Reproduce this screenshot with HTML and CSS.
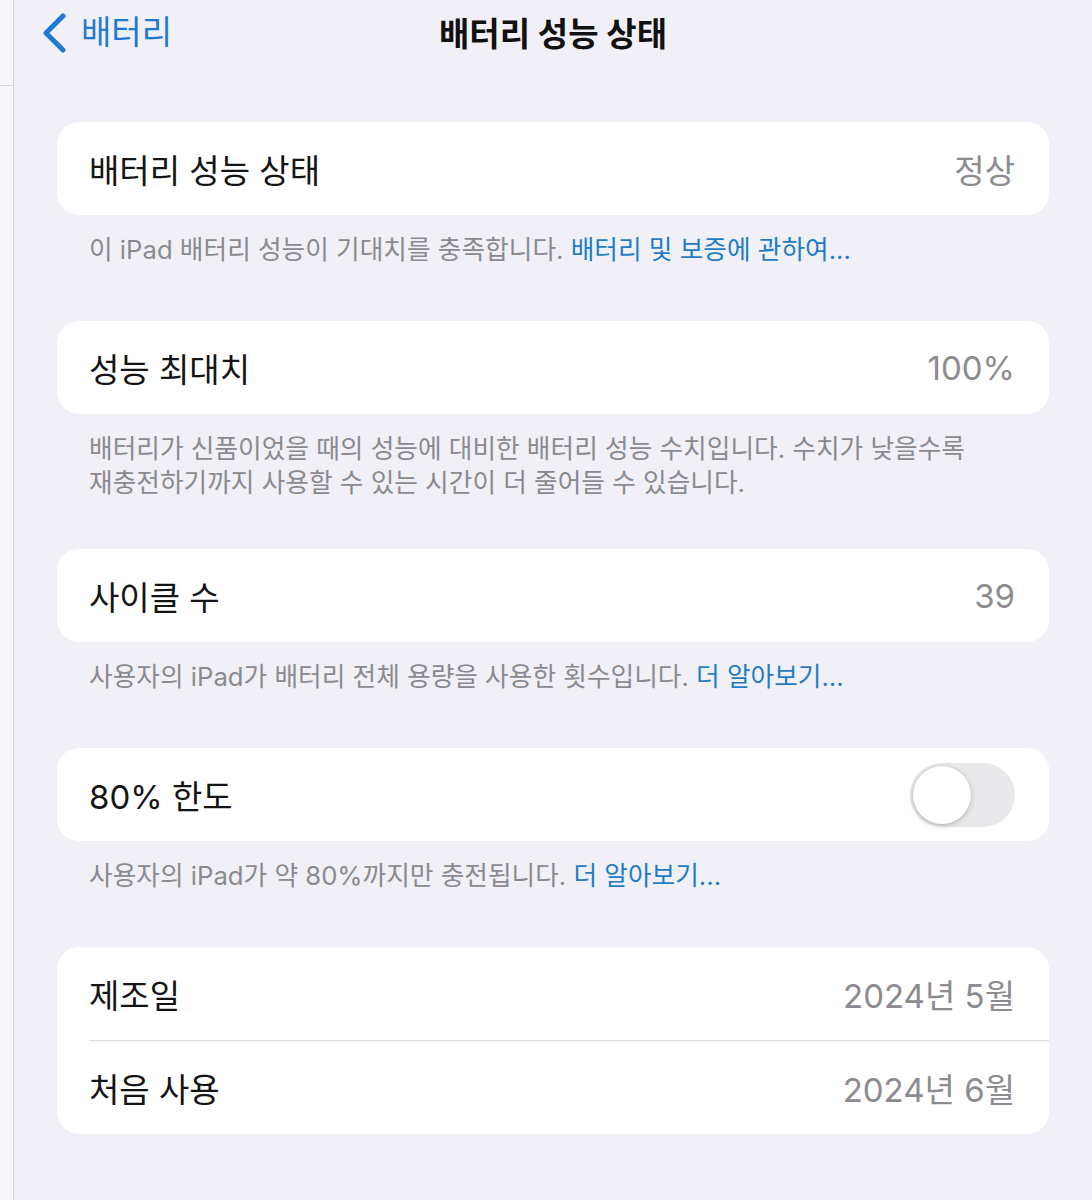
FILE: index.html
```html
<!DOCTYPE html>
<html lang="ko">
<head>
    <meta charset="UTF-8">
    <meta name="viewport" content="width=device-width, initial-scale=1.0">
    <title>배터리 성능 상태</title>
    <link rel="stylesheet" href="styles.css">
</head>
<body>
    <div class="page">
        <div class="sidebar-edge">
            <div class="sidebar-line"></div>
        </div>
        <div class="main">
            <header class="nav-bar">
                <a class="back" href="#">
                    <svg width="26" height="40" viewBox="0 0 26 40"><path d="M22 3 L5 20 L22 37" fill="none" stroke="#1f7ad6" stroke-width="5" stroke-linecap="round" stroke-linejoin="round"/></svg>
                    <span>배터리</span>
                </a>
                <h1 class="nav-title">배터리 성능 상태</h1>
            </header>

            <div class="group">
                <div class="card">
                    <div class="row">
                        <span class="label">배터리 성능 상태</span>
                        <span class="value">정상</span>
                    </div>
                </div>
                <p class="footnote">이 iPad 배터리 성능이 기대치를 충족합니다. <a href="#">배터리 및 보증에 관하여...</a></p>
            </div>

            <div class="group group-tight">
                <div class="card">
                    <div class="row">
                        <span class="label">성능 최대치</span>
                        <span class="value">100%</span>
                    </div>
                </div>
                <p class="footnote">배터리가 신품이었을 때의 성능에 대비한 배터리 성능 수치입니다. 수치가 낮을수록<br>재충전하기까지 사용할 수 있는 시간이 더 줄어들 수 있습니다.</p>
            </div>

            <div class="group">
                <div class="card">
                    <div class="row">
                        <span class="label">사이클 수</span>
                        <span class="value">39</span>
                    </div>
                </div>
                <p class="footnote">사용자의 iPad가 배터리 전체 용량을 사용한 횟수입니다. <a href="#">더 알아보기...</a></p>
            </div>

            <div class="group">
                <div class="card">
                    <div class="row">
                        <span class="label">80% 한도</span>
                        <span class="switch"><span class="knob"></span></span>
                    </div>
                </div>
                <p class="footnote">사용자의 iPad가 약 80%까지만 충전됩니다. <a href="#">더 알아보기...</a></p>
            </div>

            <div class="group">
                <div class="card">
                    <div class="row">
                        <span class="label">제조일</span>
                        <span class="value">2024년 5월</span>
                    </div>
                    <div class="divider"></div>
                    <div class="row">
                        <span class="label">처음 사용</span>
                        <span class="value">2024년 6월</span>
                    </div>
                </div>
            </div>
        </div>
    </div>
</body>
</html>
```

FILE: styles.css
```css
body {
    margin: 0;
    padding: 0;
    background-color: #f1f0f6;
    font-family: Inter, "Noto Sans CJK KR", "Noto Sans", sans-serif;
    color: #111;
}
.page {
    display: flex;
    min-height: 1200px;
}
.sidebar-edge {
    width: 13px;
    flex-shrink: 0;
    background-color: #f7f7f9;
    border-right: 1px solid #d6d6da;
}
.sidebar-line {
    margin-top: 85px;
    border-top: 1px solid #d6d6da;
}
.main {
    flex: 1;
    padding: 0 43px 0 43px;
}
.nav-bar {
    position: relative;
    height: 64px;
    display: flex;
    align-items: center;
    justify-content: center;
    margin-bottom: 58px;
}
.back {
    position: absolute;
    left: -16px;
    top: 12px;
    display: flex;
    align-items: center;
    gap: 14px;
    color: #1f7ad6;
    text-decoration: none;
    font-size: 33px;
}
.back span {
    margin-top: -6px;
}
.nav-title {
    margin: 0;
    font-size: 33px;
    font-weight: bold;
    color: #111;
}
.group {
    margin-bottom: 54px;
}
.group-tight {
    margin-bottom: 49px;
}
.card {
    background-color: #fff;
    border-radius: 22px;
    overflow: hidden;
}
.row {
    height: 93px;
    padding: 0 34px 0 32px;
    display: flex;
    align-items: center;
    justify-content: space-between;
    font-size: 33px;
}
.label {
    color: #141414;
}
.value {
    color: #8c8c90;
}
.divider {
    margin-left: 32px;
    border-top: 1px solid #d9d9dc;
}
.switch {
    width: 105px;
    height: 64px;
    border-radius: 32px;
    background-color: #e9e9eb;
    position: relative;
}
.knob {
    position: absolute;
    left: 3px;
    top: 3px;
    width: 58px;
    height: 58px;
    border-radius: 50%;
    background-color: #fff;
    box-shadow: 0 2px 6px rgba(0, 0, 0, 0.18), 0 0 0 1px rgba(0, 0, 0, 0.05);
}
.footnote {
    margin: 18px 0 0 32px;
    font-size: 25.7px;
    line-height: 34px;
    color: #8a8a8e;
}
.footnote a {
    color: #1e7dc6;
    text-decoration: none;
}
```
